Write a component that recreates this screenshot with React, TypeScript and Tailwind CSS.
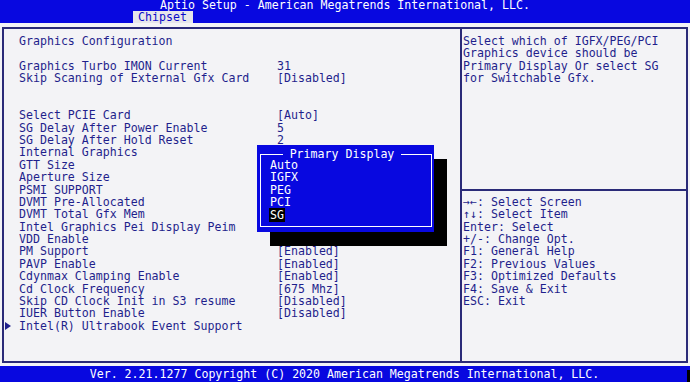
const items: { label: string; value?: string; submenu?: boolean }[] = [
  { label: "Graphics Configuration" },
  { label: "" },
  { label: "Graphics Turbo IMON Current", value: "31" },
  { label: "Skip Scaning of External Gfx Card", value: "[Disabled]" },
  { label: "" },
  { label: "" },
  { label: "Select PCIE Card", value: "[Auto]" },
  { label: "SG Delay After Power Enable", value: "5" },
  { label: "SG Delay After Hold Reset", value: "2" },
  { label: "Internal Graphics" },
  { label: "GTT Size" },
  { label: "Aperture Size" },
  { label: "PSMI SUPPORT" },
  { label: "DVMT Pre-Allocated" },
  { label: "DVMT Total Gfx Mem" },
  { label: "Intel Graphics Pei Display Peim" },
  { label: "VDD Enable" },
  { label: "PM Support", value: "[Enabled]" },
  { label: "PAVP Enable", value: "[Enabled]" },
  { label: "Cdynmax Clamping Enable", value: "[Enabled]" },
  { label: "Cd Clock Frequency", value: "[675 Mhz]" },
  { label: "Skip CD Clock Init in S3 resume", value: "[Disabled]" },
  { label: "IUER Button Enable", value: "[Disabled]" },
  { label: "Intel(R) Ultrabook Event Support", submenu: true },
];

const help = [
  "Select which of IGFX/PEG/PCI",
  "Graphics device should be",
  "Primary Display Or select SG",
  "for Switchable Gfx.",
];

const keys = [
  "→←: Select Screen",
  "↑↓: Select Item",
  "Enter: Select",
  "+/-: Change Opt.",
  "F1: General Help",
  "F2: Previous Values",
  "F3: Optimized Defaults",
  "F4: Save & Exit",
  "ESC: Exit",
];

const options = ["Auto", "IGFX", "PEG", "PCI", "SG"];

export default function App() {
  return (
    <div className="relative w-[690px] h-[382px] overflow-hidden flex flex-col bg-[#f3f3f6] font-['DejaVu_Sans_Mono',monospace] text-[11.6px] leading-[12.38px]">
      {/* Header */}
      <div className="h-[23px] bg-[#0808e0] flex flex-col">
        <div className="h-[11px] leading-[11px] text-center text-white whitespace-pre">
          Aptio Setup - American Megatrends International, LLC.
        </div>
        <div className="h-[12px] flex pl-[133px]">
          <div className="w-[60px] bg-[#e6e6ea] pl-[5px] leading-[12px] text-[#0a0ac8]">Chipset</div>
        </div>
      </div>

      {/* Main panels */}
      <div className="flex-1 flex pt-[4px] pb-[3px] px-[2px]">
        <div className="w-[460px] border-2 border-[#2a2a78] pt-[6px] text-[#1f1f8c]">
          {items.map((it, i) => (
            <div key={i} className="h-[12.38px] flex whitespace-pre">
              <div className="w-[15px] flex items-center pl-[1px]">
                {it.submenu && (
                  <svg width="6" height="8" viewBox="0 0 6 8">
                    <path d="M0 0 L6 4 L0 8 Z" fill="#1f1f8c" />
                  </svg>
                )}
              </div>
              <div className="w-[258px]">{it.label}</div>
              <div>{it.value ?? ""}</div>
            </div>
          ))}
        </div>
        <div className="flex-1 border-y-2 border-r-2 border-[#2a2a78] pt-[6px] pl-[1px] text-[#1f1f8c]">
          {help.map((t, i) => (
            <div key={i} className="h-[12.38px] whitespace-pre">{t}</div>
          ))}
          <div className="h-[99px]" />
          <div className="h-[12.38px] flex items-center -ml-[1px]">
            <div className="h-[2px] w-full bg-[#2a2a78]" />
          </div>
          {keys.map((t, i) => (
            <div key={i} className="h-[12.38px] whitespace-pre">{t}</div>
          ))}
        </div>
      </div>

      {/* Footer */}
      <div className="h-[16px] bg-[#0808e0] flex">
        <div className="flex-1 text-center text-white leading-[16px] whitespace-pre pl-[2px]">
          Ver. 2.21.1277 Copyright (C) 2020 American Megatrends International, LLC.
        </div>
        <div className="w-[3px] mt-[4px] bg-black" />
      </div>

      {/* Primary Display popup */}
      <div className="absolute left-[257px] top-[145px] w-[177px] h-[87px] bg-[#0808e0] shadow-[13px_14px_0_0_#000] pt-[9px] pl-[3px] pr-[2px] pb-[5px] text-white">
        <div className="relative h-full border border-white pt-[4px] pl-[9px]">
          <div className="absolute left-0 right-0 -top-[7px] flex justify-center pr-[8px]">
            <span className="bg-[#0808e0] px-[7px] whitespace-pre">Primary Display</span>
          </div>
          {options.map((o) => (
            <div key={o} className="h-[12.38px]">
              <span className={o === "SG" ? "bg-black px-[1px] -ml-[1px]" : ""}>{o}</span>
            </div>
          ))}
        </div>
      </div>
    </div>
  );
}
